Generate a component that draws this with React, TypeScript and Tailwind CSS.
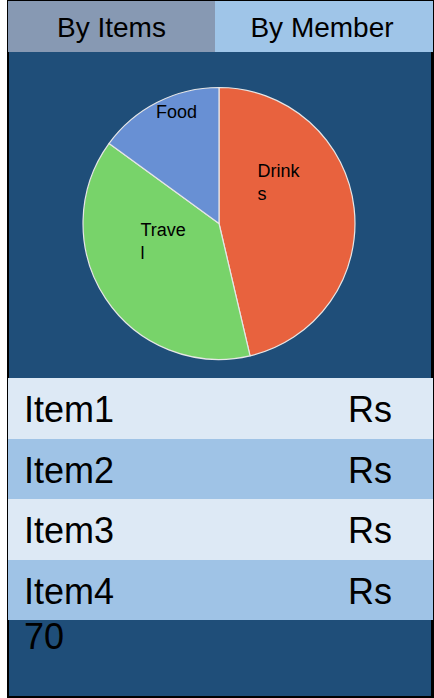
import React, { useState } from 'react';

interface ItemRow {
  name: string;
  amount: string;
  extra?: string;
}

const items: ItemRow[] = [
  { name: 'Item1', amount: 'Rs' },
  { name: 'Item2', amount: 'Rs' },
  { name: 'Item3', amount: 'Rs' },
  { name: 'Item4', amount: 'Rs', extra: '70' },
];

// 파이 조각 (중심 210,171.5 반지름 136)
const slices = [
  { label: 'Drinks', color: '#e8623e', d: 'M210 171.5 L210 35.5 A136 136 0 0 1 241.06 303.9 Z' },
  { label: 'Travel', color: '#78d36a', d: 'M210 171.5 L241.06 303.9 A136 136 0 0 1 100.1 91.4 Z' },
  { label: 'Food', color: '#6890d4', d: 'M210 171.5 L100.1 91.4 A136 136 0 0 1 210 35.5 Z' },
];

const App: React.FC = () => {
  const [tab, setTab] = useState<'items' | 'member'>('items');

  return (
    <div className="w-[434px] h-[698px] bg-white overflow-hidden font-['Liberation_Sans',Arial,sans-serif]">
      <div className="ml-[7px] w-[427px] h-[698px] bg-black pt-[1px]">
        <div className="ml-[1px] w-[425px]">
          {/* 탭 */}
          <div className="flex h-[51px]">
            <button
              onClick={() => setTab('items')}
              className={`w-[207px] h-full text-[28px] text-black pt-[3px] ${tab === 'items' ? 'bg-[#8799b3]' : 'bg-[#9fc5e8]'}`}
            >
              By Items
            </button>
            <button
              onClick={() => setTab('member')}
              className={`flex-1 h-full text-[28px] text-black pt-[3px] pr-[4px] ${tab === 'member' ? 'bg-[#8799b3]' : 'bg-[#9fc5e8]'}`}
            >
              By Member
            </button>
          </div>

          <div className="ml-[1px] w-[422px] h-[644px] bg-[#1f4e79]">
            {/* 차트 */}
            <div className="h-[326px]">
              <svg width="422" height="326" viewBox="0 0 422 326">
                {slices.map((s) => (
                  <path key={s.label} d={s.d} fill={s.color} stroke="#e6e6e6" strokeWidth="1.2" strokeLinejoin="round" />
                ))}
                <g fontFamily="Liberation Sans, Arial, sans-serif" fontSize="18" fill="#000">
                  <text x="147" y="66">Food</text>
                  <text x="248.5" y="125">Drink</text>
                  <text x="248.5" y="147.5">s</text>
                  <text x="131.5" y="184">Trave</text>
                  <text x="131.5" y="207">l</text>
                </g>
              </svg>
            </div>

            {/* 항목 목록 */}
            <div className="-ml-[1px] w-[425px]">
              {items.map((item, index) => (
                <div
                  key={item.name}
                  className={`h-[60.5px] flex pt-[9px] text-[36px] leading-[45px] text-black ${index % 2 === 0 ? 'bg-[#dde9f5]' : 'bg-[#9fc3e6]'}`}
                >
                  <div className="w-[340px] pl-[16px]">
                    <div>{item.name}</div>
                    {item.extra && <div>{item.extra}</div>}
                  </div>
                  <div>{item.amount}</div>
                </div>
              ))}
            </div>
          </div>
        </div>
      </div>
    </div>
  );
};

export default App;
